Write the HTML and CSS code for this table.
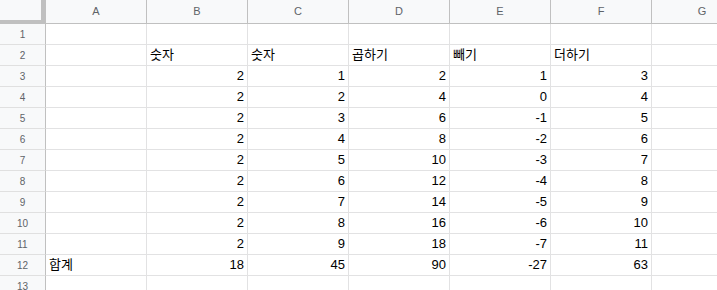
FILE: index.html
```html
<!DOCTYPE html>
<html lang="ko">
<head>
<meta charset="utf-8">
<link rel="stylesheet" href="styles.css">
</head>
<body>
<div class="sheet">
  <div class="corner"></div>
  <div class="ch">A</div><div class="ch">B</div><div class="ch">C</div><div class="ch">D</div><div class="ch">E</div><div class="ch">F</div><div class="ch">G</div>

  <div class="rh">1</div><div class="c"></div><div class="c"></div><div class="c"></div><div class="c"></div><div class="c"></div><div class="c"></div><div class="c"></div>
  <div class="rh">2</div><div class="c"></div><div class="c">숫자</div><div class="c">숫자</div><div class="c">곱하기</div><div class="c">빼기</div><div class="c">더하기</div><div class="c"></div>
  <div class="rh">3</div><div class="c"></div><div class="c n">2</div><div class="c n">1</div><div class="c n">2</div><div class="c n">1</div><div class="c n">3</div><div class="c"></div>
  <div class="rh">4</div><div class="c"></div><div class="c n">2</div><div class="c n">2</div><div class="c n">4</div><div class="c n">0</div><div class="c n">4</div><div class="c"></div>
  <div class="rh">5</div><div class="c"></div><div class="c n">2</div><div class="c n">3</div><div class="c n">6</div><div class="c n">-1</div><div class="c n">5</div><div class="c"></div>
  <div class="rh">6</div><div class="c"></div><div class="c n">2</div><div class="c n">4</div><div class="c n">8</div><div class="c n">-2</div><div class="c n">6</div><div class="c"></div>
  <div class="rh">7</div><div class="c"></div><div class="c n">2</div><div class="c n">5</div><div class="c n">10</div><div class="c n">-3</div><div class="c n">7</div><div class="c"></div>
  <div class="rh">8</div><div class="c"></div><div class="c n">2</div><div class="c n">6</div><div class="c n">12</div><div class="c n">-4</div><div class="c n">8</div><div class="c"></div>
  <div class="rh">9</div><div class="c"></div><div class="c n">2</div><div class="c n">7</div><div class="c n">14</div><div class="c n">-5</div><div class="c n">9</div><div class="c"></div>
  <div class="rh">10</div><div class="c"></div><div class="c n">2</div><div class="c n">8</div><div class="c n">16</div><div class="c n">-6</div><div class="c n">10</div><div class="c"></div>
  <div class="rh">11</div><div class="c"></div><div class="c n">2</div><div class="c n">9</div><div class="c n">18</div><div class="c n">-7</div><div class="c n">11</div><div class="c"></div>
  <div class="rh">12</div><div class="c">합계</div><div class="c n">18</div><div class="c n">45</div><div class="c n">90</div><div class="c n">-27</div><div class="c n">63</div><div class="c"></div>
  <div class="rh">13</div><div class="c"></div><div class="c"></div><div class="c"></div><div class="c"></div><div class="c"></div><div class="c"></div><div class="c"></div>
</div>
</body>
</html>
```

FILE: styles.css
```css
html, body {
  margin: 0;
  padding: 0;
  background: #ffffff;
  overflow: hidden;
}

.sheet {
  display: grid;
  width: 717px;
  height: 290px;
  overflow: hidden;
  grid-template-columns: 46px repeat(7, 101px);
  grid-template-rows: 24px repeat(13, 21px);
  font-family: Arial, "Liberation Sans", "Noto Sans CJK KR", sans-serif;
}

.sheet > div {
  box-sizing: border-box;
}

.corner {
  background: #f8f9fa;
  border-right: 1px solid #c0c0c0;
  border-bottom: 1px solid #c0c0c0;
  box-shadow: inset -4px -3px 0 #c0c0c0;
}

.ch {
  background: #f8f9fa;
  border-right: 1px solid #c0c0c0;
  border-bottom: 1px solid #c0c0c0;
  color: #5f6368;
  font-size: 11px;
  display: flex;
  align-items: center;
  justify-content: center;
  padding-bottom: 1px;
}

.rh {
  background: #f8f9fa;
  border-right: 1px solid #c0c0c0;
  border-bottom: 1px solid #e0e0e0;
  color: #5f6368;
  font-size: 10px;
  display: flex;
  align-items: center;
  justify-content: center;
}

.c {
  border-right: 1px solid #e2e2e3;
  border-bottom: 1px solid #e2e2e3;
  color: #000;
  font-size: 13px;
  padding: 0 3px 2px 3px;
  display: flex;
  align-items: flex-end;
  line-height: 16px;
  white-space: nowrap;
}

.n {
  justify-content: flex-end;
}
```
